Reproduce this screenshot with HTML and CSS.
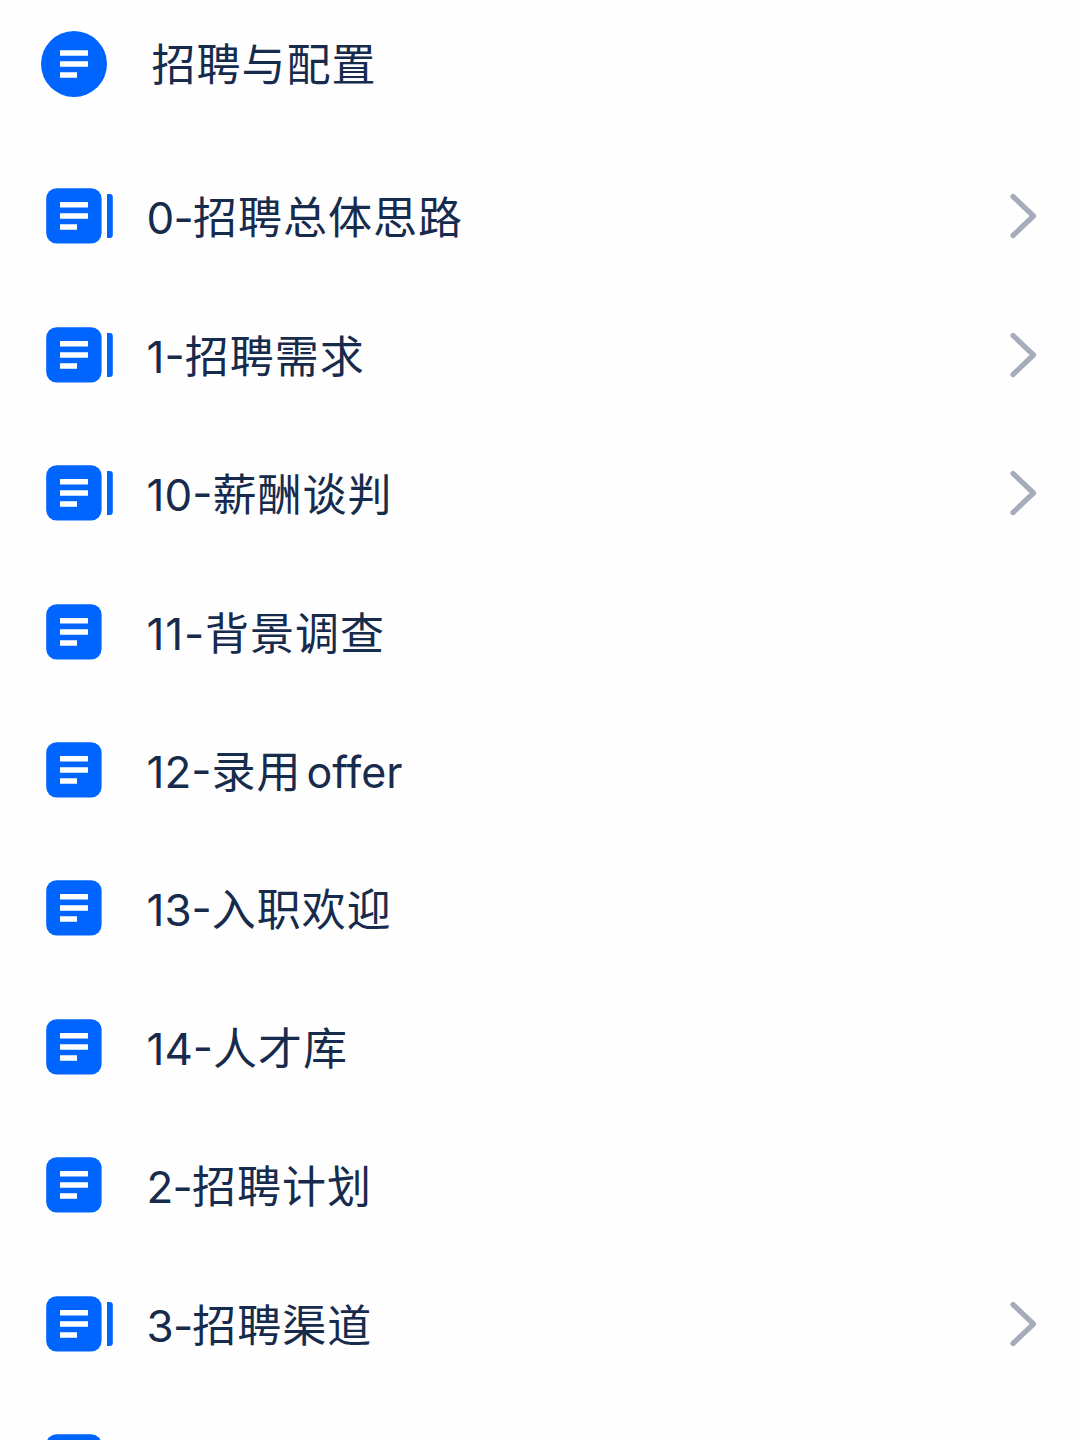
FILE: index.html
```html
<!DOCTYPE html>
<html lang="zh-CN">
<head>
<meta charset="utf-8">
<title>招聘与配置</title>
<link rel="stylesheet" href="styles.css">
</head>
<body>
<svg class="defs" aria-hidden="true">
  <symbol id="doc" viewBox="0 0 56 56"><rect x=".2" y=".2" width="55.4" height="55.4" rx="10.5" fill="#0065ff"/><path d="M14 16.8h28M14 28h28M14 39h17" stroke="#fff" stroke-width="5.6"/></symbol>
  <symbol id="stack" viewBox="0 0 67 56"><use href="#doc" width="56" height="56"/><path d="M61 6h2.8a3 3 0 0 1 3 3v38a3 3 0 0 1-3 3H61z" fill="#0065ff"/></symbol>
  <symbol id="chevron" viewBox="0 0 30 48"><path d="M5 4.5l20.5 19.5L5 43.500" fill="none" stroke="#a5adba" stroke-width="5.2" stroke-linecap="round" stroke-linejoin="round"/></symbol>
</svg>
<header class="heading">
  <svg class="badge" viewBox="0 0 66 66"><circle cx="33" cy="33" r="33" fill="#0065ff"/><path d="M19 22h28M19 33h28M19 44h17" stroke="#fff" stroke-width="5.6"/></svg>
  <h1 class="title">招聘与配置</h1>
</header>
<main class="list">
  <div class="row"><svg class="icon icon-stack"><use href="#stack"/></svg><span class="label"><span class="latin narrow">0-</span>招聘总体思路</span><svg class="chevron"><use href="#chevron"/></svg></div>
  <div class="row"><svg class="icon icon-stack"><use href="#stack"/></svg><span class="label"><span class="latin">1-</span>招聘需求</span><svg class="chevron"><use href="#chevron"/></svg></div>
  <div class="row"><svg class="icon icon-stack"><use href="#stack"/></svg><span class="label"><span class="latin">10-</span>薪酬谈判</span><svg class="chevron"><use href="#chevron"/></svg></div>
  <div class="row"><svg class="icon"><use href="#doc"/></svg><span class="label"><span class="latin wide">11-</span>背景调查</span></div>
  <div class="row"><svg class="icon"><use href="#doc"/></svg><span class="label"><span class="latin">12-</span>录用<span class="word">offer</span></span></div>
  <div class="row"><svg class="icon"><use href="#doc"/></svg><span class="label"><span class="latin">13-</span>入职欢迎</span></div>
  <div class="row"><svg class="icon"><use href="#doc"/></svg><span class="label"><span class="latin">14-</span>人才库</span></div>
  <div class="row"><svg class="icon"><use href="#doc"/></svg><span class="label"><span class="latin narrow">2-</span>招聘计划</span></div>
  <div class="row"><svg class="icon icon-stack"><use href="#stack"/></svg><span class="label"><span class="latin narrow">3-</span>招聘渠道</span><svg class="chevron"><use href="#chevron"/></svg></div>
  <div class="row row-last"><svg class="icon"><use href="#doc"/></svg></div>
</main>
</body>
</html>
```
FILE: styles.css
```css
* { box-sizing: border-box; }
body {
  margin: 0;
  height: 1440px;
  overflow: hidden;
  background: #fefefe;
  color: #172b4d;
  font-family: Inter, "Noto Sans CJK SC", sans-serif;
  font-size: 44px;
  letter-spacing: 1px;
}
.defs { display: block; width: 0; height: 0; }
.heading { display: flex; align-items: center; height: 127px; padding-left: 40.5px; gap: 45px; }
.badge { width: 66px; height: 66px; }
.title { margin: 0; padding-bottom: 3px; font-size: 44px; font-weight: 400; }
.list { display: flex; flex-direction: column; height: 1293px; margin-top: 20px; overflow: hidden; }
.row { display: flex; flex: none; align-items: center; height: 138.45px; padding: 0 42px 0 46px; }
.row-last { height: 47px; align-items: flex-start; padding-top: 41px; overflow: hidden; }
.icon { flex: none; width: 56px; height: 56px; margin-right: 45px; }
.icon-stack { width: 67px; margin-right: 34px; }
.label { padding-top: 4px; font-weight: 400; line-height: 64px; white-space: nowrap; }
.latin { margin-left: -0.5px; font-weight: 400; letter-spacing: 0; }
.narrow { letter-spacing: -0.8px; }
.wide { letter-spacing: 0.8px; }
.word { margin-left: 5px; font-size: 43px; letter-spacing: 0; }
.chevron { width: 30px; height: 48px; margin-left: auto; }
```
